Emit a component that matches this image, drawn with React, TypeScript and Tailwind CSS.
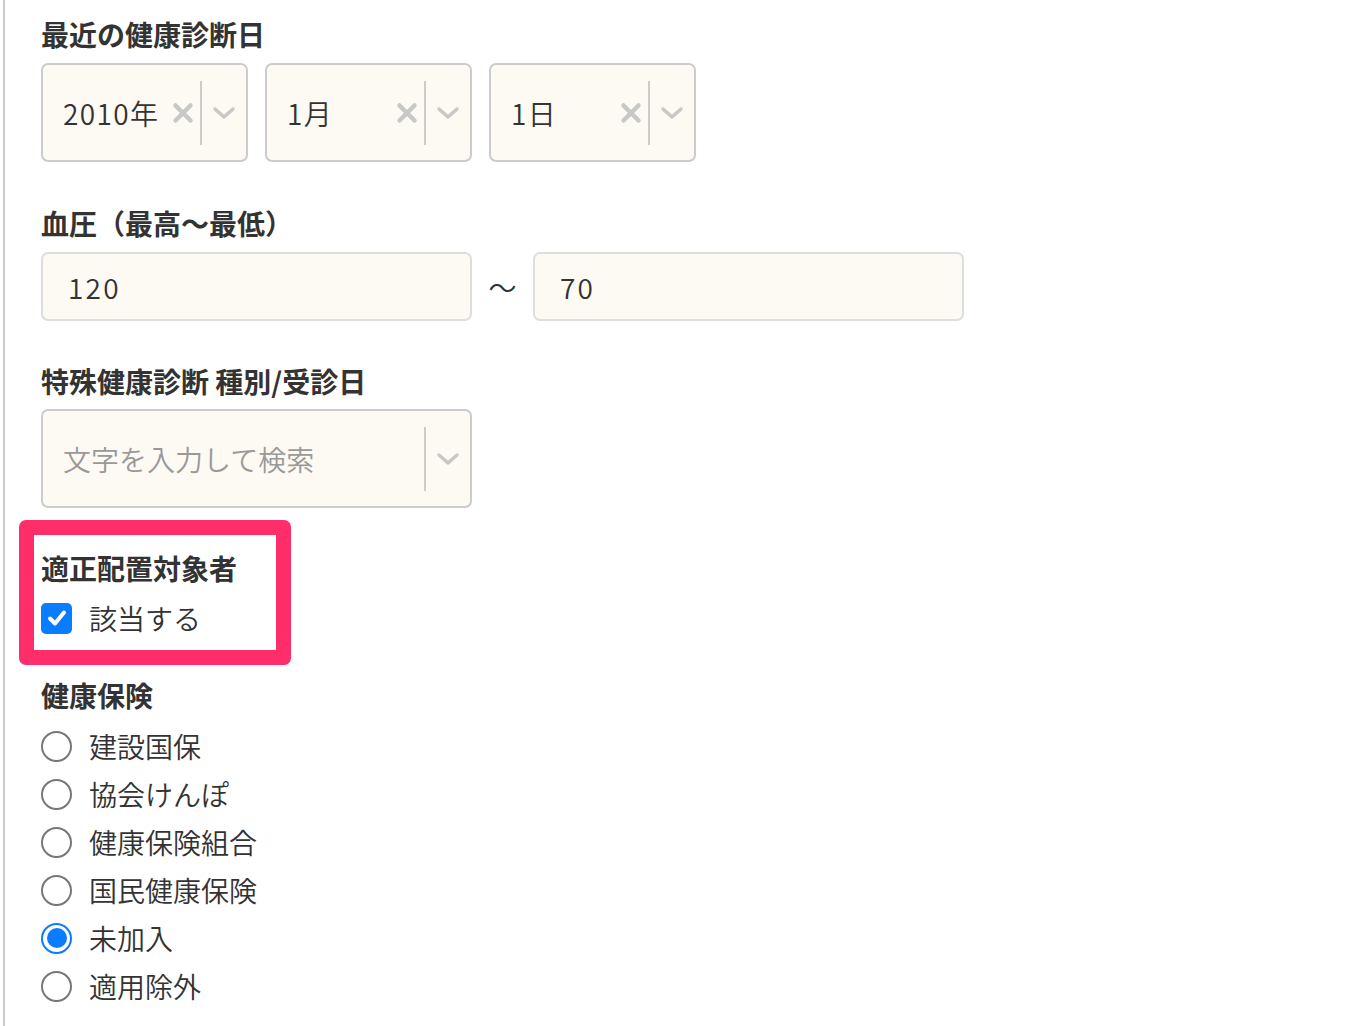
import { useState } from 'react';

const font = { fontFamily: '"Noto Sans CJK JP", "Noto Sans", sans-serif' };

function ClearIcon() {
    return (
        <svg width="22" height="22" viewBox="0 0 22 22" className="shrink-0">
            <path d="M3.5 3.5 L18.5 18.5 M18.5 3.5 L3.5 18.5" stroke="#c8c8c8" strokeWidth="4.5" strokeLinecap="round" />
        </svg>
    );
}

function Chevron() {
    return (
        <svg width="24" height="14" viewBox="0 0 24 14">
            <path d="M3 3 L12 11 L21 3" stroke="#c8c8c8" strokeWidth="3.5" fill="none" strokeLinecap="round" strokeLinejoin="round" />
        </svg>
    );
}

function Select({ value, placeholder, width }: { value?: string; placeholder?: string; width: string }) {
    return (
        <div className={`${width} flex h-[99px] items-center rounded-[7px] border-2 border-[#cccccc] bg-[#fdf9f3]`}>
            <div className="flex min-w-0 flex-1 items-center pl-[20px]">
                {value ? (
                    <span className="text-[28px] leading-none font-[350] tracking-[0.05em] text-[#333333]">{value}</span>
                ) : (
                    <span className="text-[28px] leading-none font-[350] text-[#999999]">{placeholder}</span>
                )}
            </div>
            {value && (
                <div className="flex w-[34px] justify-center">
                    <ClearIcon />
                </div>
            )}
            <div className="h-[64px] w-[2px] bg-[#cccccc]" />
            <div className="flex w-[44px] justify-center">
                <Chevron />
            </div>
        </div>
    );
}

function TextInput({ value }: { value: string }) {
    return (
        <div className="flex h-[69px] w-[431px] items-center rounded-[7px] border-2 border-[#dedede] bg-[#fdf9f3] pl-[25px]">
            <span className="text-[28px] leading-none font-[350] tracking-[0.08em] text-[#333333]">{value}</span>
        </div>
    );
}

function Label({ children, mb }: { children: React.ReactNode; mb: string }) {
    return <div className={`${mb} text-[28px] leading-[28px] font-bold text-[#333333]`}>{children}</div>;
}

function Radio({ checked }: { checked: boolean }) {
    return checked ? (
        <div className="flex h-[31px] w-[31px] items-center justify-center rounded-full border-2 border-[#0a7cff]">
            <div className="h-[20px] w-[20px] rounded-full bg-[#0a7cff]" />
        </div>
    ) : (
        <div className="h-[31px] w-[31px] rounded-full border-2 border-[#777777]" />
    );
}

export default function App() {
    const [insurance, setInsurance] = useState('未加入');
    const options = ['建設国保', '協会けんぽ', '健康保険組合', '国民健康保険', '未加入', '適用除外'];

    return (
        <div className="min-h-[1026px] bg-white" style={font}>
            <div className="ml-[3px] min-h-[1026px] border-l-2 border-[#cccccc] pt-[20px] pl-[36px]">
                <Label mb="mb-[15px]">最近の健康診断日</Label>
                <div className="flex gap-[17px]">
                    <Select value="2010年" width="w-[207px]" />
                    <Select value="1月" width="w-[207px]" />
                    <Select value="1日" width="w-[207px]" />
                </div>

                <div className="mt-[47px]">
                    <Label mb="mb-[15px]">血圧（最高〜最低）</Label>
                    <div className="flex items-center">
                        <TextInput value="120" />
                        <div className="w-[61px] text-center text-[28px] leading-none font-[350] text-[#333333]">〜</div>
                        <TextInput value="70" />
                    </div>
                </div>

                <div className="mt-[46px]">
                    <Label mb="mb-[14px]">特殊健康診断 種別/受診日</Label>
                    <Select placeholder="文字を入力して検索" width="w-[431px]" />
                </div>

                <div className="relative mt-[46px]">
                    <div className="absolute top-[-34px] left-[-22px] h-[145px] w-[272px] rounded-[7px] border-[15px] border-[#ff2e6b]" />
                    <Label mb="mb-[12px]">適正配置対象者</Label>
                    <div className="flex h-[48px] items-center gap-[17px]">
                        <div className="flex h-[31px] w-[31px] items-center justify-center rounded-[5px] bg-[#0a7cff]">
                            <svg width="22" height="22" viewBox="0 0 22 22">
                                <path d="M4 11.5 L9 16.5 L18 5.5" stroke="white" strokeWidth="4" fill="none" strokeLinecap="round" strokeLinejoin="round" />
                            </svg>
                        </div>
                        <span className="text-[28px] leading-none font-[350] text-[#333333]">該当する</span>
                    </div>
                </div>

                <div className="mt-[39px]">
                    <Label mb="mb-[13px]">健康保険</Label>
                    {options.map((o) => (
                        <div key={o} className="flex h-[48px] cursor-pointer items-center gap-[17px]" onClick={() => setInsurance(o)}>
                            <Radio checked={insurance === o} />
                            <span className="text-[28px] leading-none font-[350] text-[#333333]">{o}</span>
                        </div>
                    ))}
                </div>
            </div>
        </div>
    );
}
